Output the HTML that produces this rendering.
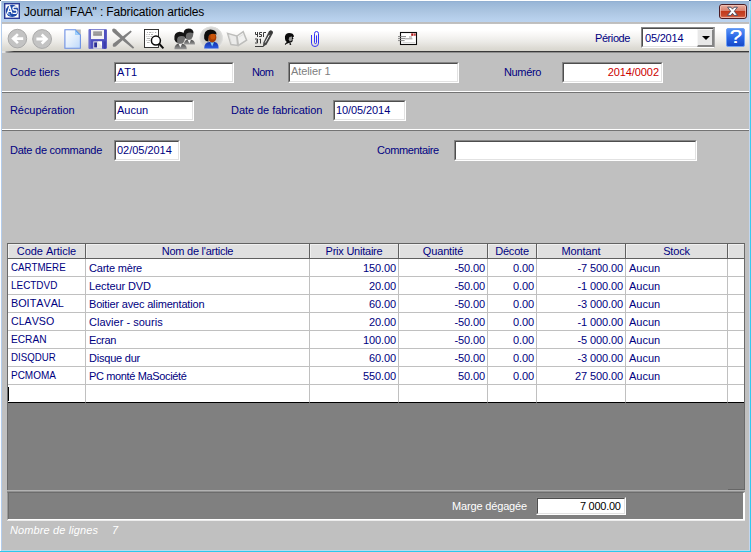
<!DOCTYPE html>
<html>
<head>
<meta charset="utf-8">
<title>Journal FAA</title>
<style>
html,body{margin:0;padding:0;}
body{width:751px;height:552px;overflow:hidden;background:#c0c0c0;position:relative;font-family:"Liberation Sans",sans-serif;font-size:11px;color:#000080;font-kerning:none;}
.abs{position:absolute;}
#titlebar{left:0;top:0;width:751px;height:24px;background:linear-gradient(to bottom,#8fadd0 1px,#99b6d7 2.5px,#a3bedc 7px,#aec7e3 13px,#b6cfeb 18px,#bbd3ef 22px,#bcbcbc 22px,#c2c2c2 24px);}
#titletext{left:24px;top:4px;font-size:12px;line-height:16px;color:#000;white-space:nowrap;}
#toolbar{left:2px;top:24px;width:747px;height:27px;background:linear-gradient(to bottom,#ffffff 0px,#ffffff 6px,#f6f5f3 12px,#ebeae6 18px,#dddbd4 24px,#d8d6ce 27px);}
#tbline{left:2px;top:51px;width:747px;height:2px;background:linear-gradient(to bottom,#3a3a3a 0px,#3a3a3a 1px,#8e8e8e 1px,#8e8e8e 2px);}
.lbl{position:absolute;white-space:nowrap;line-height:13px;height:13px;color:#000080;}
.inp{position:absolute;box-sizing:border-box;background:#fff;border:1px solid;border-color:#868686 #fff #fff #868686;height:21px;}
.inp>i{position:absolute;left:0;top:0;right:0;bottom:0;border:1px solid;border-color:#4e4e4e #e2e2e2 #e2e2e2 #4e4e4e;}
.inp>span{position:absolute;left:2px;top:3px;line-height:13px;white-space:nowrap;}
.inp.r>span{left:auto;right:3px;}
.sep{position:absolute;left:2px;width:747px;height:2px;border-top:1px solid #fff;border-bottom:1px solid #737373;box-sizing:border-box;}
#grid{left:7px;top:243px;width:738px;height:247px;background:#808080;box-sizing:border-box;border:1px solid #6a6a6a;border-top-color:#626262;border-bottom:none;}
table{border-collapse:separate;border-spacing:0;position:absolute;left:8px;top:244px;table-layout:fixed;background:#fff;}
td,th{box-sizing:border-box;padding:0;font-weight:normal;font-size:11px;color:#000080;white-space:nowrap;overflow:hidden;}
th{height:15px;background:#e0e0e0;border-right:1px solid #606060;border-bottom:1px solid #606060;line-height:14px;text-align:center;box-shadow:inset 1px 1px 0 #f0f0f0;}
td{height:18px;border-right:1px solid #c0c0c0;border-bottom:1px solid #c0c0c0;line-height:13px;padding:3px 2px 1px 3px;}
td.n{text-align:right;}
td.c{padding-top:2px;padding-bottom:2px;}
td span,th span{display:inline-block;}
tr.last td{border-bottom:1px solid #000;}
td:last-child,th:last-child{border-right:none;}
</style>
</head>
<body>
<div id="titlebar" class="abs"></div>
<div id="titletext" class="abs" style="letter-spacing:-0.14px">Journal "FAA" : Fabrication articles</div>
<div id="toolbar" class="abs"></div>
<div id="tbline" class="abs"></div>
<div class="abs" style="left:2px;top:51px;width:12px;height:2px;background:linear-gradient(to right,#e4e4e4 0px,#e0e0e0 3px,#a8a8a8 4px,#8a8a8a 7px,rgba(90,90,90,0) 12px);"></div>
<!-- app icon -->
<svg class="abs" style="left:4px;top:3px" width="16" height="16" viewBox="0 0 16 16">
<rect x="0.7" y="0.7" width="14.6" height="14.6" fill="#fff" stroke="#2a3a96" stroke-width="1.4"/>
<circle cx="8.1" cy="7.9" r="6.2" fill="#1c48a8"/>
<path d="M2.4 9.6 Q4 12.6 8 13.4 Q5.6 11.6 5.2 9.4 Z" fill="#6f9be0"/>
<path d="M3.3 10.6 L5.7 3.4 L8.1 10.6 M4.2 8.3 H7.2" fill="none" stroke="#fff" stroke-width="1.35"/>
<path d="M12.9 4 H10.2 Q8.9 4 8.9 5.5 Q8.9 7 10.3 7 H11.6 Q13 7 13 8.7 Q13 10.4 11.6 10.4 H8.7" fill="none" stroke="#fff" stroke-width="1.35"/>
</svg>
<!-- close button -->
<svg class="abs" style="left:719px;top:4px" width="28" height="15" viewBox="0 0 28 15">
<defs><linearGradient id="cg" x1="0" y1="0" x2="0" y2="1"><stop offset="0" stop-color="#eab2a4"/><stop offset="0.45" stop-color="#d9806c"/><stop offset="0.5" stop-color="#c2391c"/><stop offset="0.8" stop-color="#c94a2c"/><stop offset="1" stop-color="#e08c74"/></linearGradient></defs>
<rect x="0.5" y="0.5" width="27" height="14" rx="2.5" fill="url(#cg)" stroke="#4b1c24" stroke-width="1"/>
<rect x="1.5" y="1.5" width="25" height="12" rx="1.5" fill="none" stroke="#f3c8bc" stroke-opacity="0.7" stroke-width="1"/>
<path d="M8.6 3.2 L12 3.2 L13.5 5.2 L15 3.2 L18.4 3.2 L15.3 7.3 L18.6 11.4 L15.1 11.4 L13.5 9.3 L11.9 11.4 L8.4 11.4 L11.7 7.3 Z" fill="#fff" stroke="#45485c" stroke-width="0.9" stroke-linejoin="round"/>
</svg>
<!-- toolbar icons -->
<svg class="abs" style="left:0;top:23px" width="751" height="30" viewBox="0 23 751 30">
<defs>
<linearGradient id="docg" x1="0" y1="0" x2="1" y2="1"><stop offset="0" stop-color="#ffffff"/><stop offset="0.5" stop-color="#e2eefc"/><stop offset="1" stop-color="#bcd8fb"/></linearGradient>
<radialGradient id="hl" cx="0.5" cy="0.5" r="0.5"><stop offset="0" stop-color="#b4b4b2"/><stop offset="0.5" stop-color="#c8c8c6"/><stop offset="0.85" stop-color="#d6d6d4"/><stop offset="0.95" stop-color="#e2e2e0"/><stop offset="1" stop-color="#eeeeec" stop-opacity="0"/></radialGradient>
<linearGradient id="hg" x1="0" y1="0" x2="0" y2="1"><stop offset="0" stop-color="#5a94f6"/><stop offset="0.5" stop-color="#2a66e6"/><stop offset="1" stop-color="#1648c8"/></linearGradient>
<linearGradient id="gb" x1="0" y1="0" x2="0" y2="1"><stop offset="0" stop-color="#484848"/><stop offset="1" stop-color="#9a9a9a"/></linearGradient>
<linearGradient id="bb" x1="0" y1="0" x2="0" y2="1"><stop offset="0" stop-color="#1230a8"/><stop offset="1" stop-color="#2c5ce4"/></linearGradient>
</defs>
<!-- back / forward -->
<circle cx="17.4" cy="38.6" r="9.3" fill="#c3c3c3" stroke="#a9a9a9" stroke-width="1"/>
<path d="M11.2 38.6 L17 33.2 L18.8 35 L16.6 37.2 L23.2 37.2 L23.2 40 L16.6 40 L18.8 42.2 L17 44 Z" fill="#fff"/>
<circle cx="42.1" cy="39" r="9.4" fill="#c3c3c3" stroke="#a9a9a9" stroke-width="1"/>
<path d="M48.4 39 L42.6 33.6 L40.8 35.4 L43 37.6 L36.4 37.6 L36.4 40.4 L43 40.4 L40.8 42.6 L42.6 44.4 Z" fill="#fff"/>
<!-- new doc -->
<path d="M64.9 29.7 H75.6 L80.4 34.6 V48.3 H64.9 Z" fill="url(#docg)" stroke="#6b8fe4" stroke-width="1.1"/>
<path d="M75.6 29.4 H80.8 V34.8 Z" fill="#b9b9b9"/>
<path d="M75.4 29.8 V34.8 H80.4 Z" fill="#4f9cf0"/>
<path d="M75.4 31 V34.8 H79.2 Z" fill="#a8d4fb"/>
<!-- save -->
<rect x="88.7" y="29.3" width="18.2" height="19.4" rx="0.8" fill="#4e50c0"/>
<rect x="88.7" y="29.3" width="2" height="19.4" fill="#6a6ccc"/>
<rect x="91" y="29.9" width="13" height="9.2" fill="#f4f4f4"/>
<rect x="93.2" y="31.2" width="8.8" height="4.8" fill="#a8a8a8"/>
<rect x="93.2" y="32.6" width="8.8" height="0.7" fill="#8a8a8a"/>
<rect x="93.2" y="34.4" width="8.8" height="0.7" fill="#8a8a8a"/>
<rect x="93.3" y="41.4" width="8.7" height="7.3" fill="#e6e6e6"/>
<rect x="94.2" y="42.4" width="2.8" height="5" fill="#2a2c96"/>
<path d="M97.5 41.4 H102 V46 Z" fill="#fff"/>
<rect x="103.6" y="41.4" width="2.2" height="7.3" fill="#3a3cae"/>
<!-- delete X -->
<path d="M112.4 29 Q114 27.8 115.6 29.2 L134.2 47.4 L133 48.8 L124 41.6 L112.8 32 Q111.8 30.4 112.4 29 Z" fill="#808080"/>
<path d="M130.6 30.4 L131.8 31.8 L116 46.2 Q114.2 47.4 113 46.4 Q112.2 45 113.4 43.6 Z" fill="#808080"/>
<!-- preview -->
<rect x="144.5" y="29.5" width="14" height="18" fill="#fff" stroke="#2c2c2c" stroke-width="0.95"/>
<g fill="#b4b4b4"><rect x="147" y="32" width="1" height="1"/><rect x="149" y="32" width="2.4" height="1"/><rect x="152.4" y="32" width="1" height="1"/><rect x="155" y="32" width="1.2" height="1"/>
<rect x="146.4" y="34" width="1" height="1"/><rect x="148.6" y="34" width="1.4" height="1"/><rect x="151" y="34" width="2" height="1"/>
<rect x="146.4" y="36" width="1" height="1"/><rect x="148.4" y="36" width="1" height="1"/><rect x="150.4" y="36" width="2" height="1"/>
<rect x="146.8" y="38" width="3.4" height="1"/><rect x="146.4" y="40" width="1" height="1"/><rect x="148.4" y="40" width="1.6" height="1"/>
<rect x="147" y="42" width="2.6" height="1"/></g>
<circle cx="155.9" cy="40.6" r="4.5" fill="#fff" stroke="#0a0a0a" stroke-width="1.5"/>
<path d="M159.4 44 L163.4 48.4" stroke="#0a0a0a" stroke-width="1.9" fill="none"/>
<!-- two grey persons -->
<g>
<path d="M184 44.4 Q184 39.6 189 39.6 Q195 39.6 195 44.4 Z" fill="url(#gb)"/>
<path d="M187.6 39.8 L189.4 43.4 L191 39.8 Z" fill="#f2f2f2"/>
<ellipse cx="188.6" cy="34.6" rx="4.6" ry="5.2" fill="#6c6c6c"/>
<path d="M183.6 36 Q182.6 29 188.4 28.6 Q193.6 28.8 193.6 33.4 Q190 31.4 186.6 33.4 Q185.4 35 186 38.4 Q184 38 183.6 36 Z" fill="#161616"/>
<path d="M174.4 49.2 Q174.4 43.4 180 43.4 Q186.8 43.4 186.8 49.2 Z" fill="url(#gb)"/>
<path d="M178.4 43.6 L180.4 47.6 L182.2 43.6 Z" fill="#f2f2f2"/>
<ellipse cx="180" cy="38.2" rx="5" ry="5.6" fill="#707070"/>
<path d="M174.4 39.6 Q173.4 32.2 179.6 31.8 Q185.4 32 185.4 37 Q181.6 35 178 37 Q176.6 38.6 177.2 42.4 Q175 42 174.4 39.6 Z" fill="#141414"/>
</g>
<!-- coloured person -->
<circle cx="211.2" cy="38.2" r="12.2" fill="url(#hl)"/>
<path d="M204.2 48.4 Q204.2 42.2 209.6 42 L214.4 42 Q218.6 42.4 218.6 48.4 Z" fill="url(#bb)"/>
<path d="M210.2 42.2 L212.2 46.6 L214 42.2 Z" fill="#86d2f4"/>
<ellipse cx="212.2" cy="37.4" rx="4.1" ry="5" fill="#a63e06"/>
<ellipse cx="212.8" cy="36.4" rx="2.4" ry="3" fill="#c8540a"/>
<path d="M204.2 38.6 Q203.2 30 210.4 29.4 Q216.6 29.6 216.6 34.6 Q212.6 32.6 209.4 34.8 Q207.8 36.8 208.6 41.6 Q205 41.4 204.2 38.6 Z" fill="#0c0c0c"/>
<!-- book (faded) -->
<path d="M227.6 33.4 L237 36 L237.6 45.4 L231 44.6 Z" fill="#ebebea" stroke="#bdbdbb" stroke-width="1.5"/>
<path d="M237 36 L243.2 31.6 L246.6 40.2 L238.4 45.4 Z" fill="#f0f0ef" stroke="#bdbdbb" stroke-width="1.5"/>
<path d="M229 35 L231.6 43.6 M239 37 L244 34" stroke="#dcdcda" stroke-width="0.8" fill="none"/>
<!-- 450/31 pencil -->
<g stroke="#3c3c3c" stroke-width="1" fill="none">
<path d="M255.5 32 V34.5 H258 M257.5 32 V37"/>
<path d="M262 32.5 H259.5 V34.5 H261.5 V36.5 H259"/>
<path d="M263.5 37 V32.5 H266"/>
<path d="M255 39 H257.5 V41 H256 M257.5 41 V43 H255"/>
<path d="M259.5 39.5 L260.5 39 V43.5"/>
<path d="M255 46.5 H263.4"/>
</g>
<path d="M262.8 47 L263.4 42.4 L268.8 31.6 Q270.4 29.8 272.2 31 Q273.4 32.2 272.6 33.8 L266.6 44.6 Z" fill="#454545"/><circle cx="270.9" cy="32.2" r="1.7" fill="#3a3a3a"/>
<path d="M265.2 42.6 L269.2 35.2" stroke="#ededed" stroke-width="1"/>
<!-- little face -->
<path d="M285 39 Q284.2 33.4 289 33 Q293.6 33 294 36.4 L292.6 37.6 L293.6 38.6 L292.4 39.4 L292.8 41 Q291.6 42.6 290.2 42.6 L291.4 44.6 L290.2 45 L288.6 43.4 L286.6 43.8 L285.4 45 L284.8 44 L286.8 42 Q285.2 41 285 39 Z" fill="#0a0a0a"/>
<path d="M289.4 37 L292 36.6 L291.8 40.6 L289.8 41.6 L288.6 39.6 Z" fill="#9a9a9a"/>
<path d="M287.4 43.2 L289 44.4 L290 42.8 Z" fill="#d8d8d8"/>
<!-- paperclip -->
<path d="M311.5 35 V43.2 Q311.5 46.5 315 46.5 Q318.5 46.5 318.5 43.2 V33.6 Q318.5 31.5 316.5 31.5 Q314.5 31.5 314.5 33.6 V42.6 Q314.5 43.6 315.5 43.6 Q316.5 43.6 316.5 42.6 V35.4" fill="none" stroke="#2a2af6" stroke-width="0.95"/>
<!-- envelope -->
<rect x="400.5" y="32.5" width="16" height="12" fill="#fff" stroke="#0c0c0c" stroke-width="1.1"/>
<rect x="411.2" y="33.4" width="2" height="2.4" fill="#b01818"/><rect x="413.6" y="33.4" width="2.2" height="2.4" fill="#c04848"/>
<path d="M398 36.6 H406 M398 38.6 H405 M398 40.6 H404.6" stroke="#7a7a7a" stroke-width="0.9"/>
<path d="M405 38.8 H412.4 M409 37 H412" stroke="#8a8a8a" stroke-width="0.9"/>
<path d="M402.6 42.6 H415" stroke="#c8c8c8" stroke-width="0.8"/>
<!-- help -->
<rect x="726.5" y="28.5" width="18" height="18" rx="1.5" fill="url(#hg)" stroke="#6ea0f4" stroke-width="1"/>
</svg>
<div class="abs" style="left:726px;top:28px;width:19px;height:19px;text-align:center;font-size:18px;line-height:19px;color:#fff;transform:scaleX(1.22);text-shadow:0.5px 0 0 #fff;">?</div>
<!-- Periode + combo -->
<div class="lbl" style="left:595px;top:32px;letter-spacing:-0.42px;">Période</div>
<div class="inp" style="left:641px;top:27px;width:74px;height:21px;border-right-color:#a4a4a4;"><i></i><span style="left:3px;top:4px;letter-spacing:-0.2px;">05/2014</span>
<div class="abs" style="left:55px;top:1px;width:17px;height:18px;box-sizing:border-box;background:#e8e8e8;border:solid;border-width:1px 2px 2px 1px;border-color:#f6f6f6 #858585 #858585 #f6f6f6;"><div class="abs" style="left:4px;top:6px;width:0;height:0;border-left:4px solid transparent;border-right:4px solid transparent;border-top:4px solid #000;"></div></div>
</div>

<!-- form -->
<div class="lbl" style="left:10px;top:66px;letter-spacing:-0.08px;">Code tiers</div>
<div class="inp" style="left:114px;top:62px;width:120px;"><i></i><span>AT1</span></div>
<div class="lbl" style="left:252px;top:66px;letter-spacing:-0.62px;">Nom</div>
<div class="inp" style="left:288px;top:62px;width:171px;"><i></i><span style="letter-spacing:-0.10px;color:#808080;top:2px;">Atelier 1</span></div>
<div class="lbl" style="left:504px;top:66px;letter-spacing:-0.35px;">Numéro</div>
<div class="inp r" style="left:562px;top:62px;width:101px;"><i></i><span style="letter-spacing:-0.10px;margin-right:0.10px;color:#cc0000;">2014/0002</span></div>
<div class="sep" style="top:91px;"></div>
<div class="lbl" style="left:10px;top:104px;letter-spacing:-0.07px;">Récupération</div>
<div class="inp" style="left:114px;top:100px;width:80px;"><i></i><span>Aucun</span></div>
<div class="lbl" style="left:231px;top:104px;letter-spacing:-0.05px;">Date de fabrication</div>
<div class="inp" style="left:333px;top:100px;width:73px;"><i></i><span style="letter-spacing:-0.09px;">10/05/2014</span></div>
<div class="sep" style="top:129px;"></div>
<div class="lbl" style="left:10px;top:144px;letter-spacing:-0.25px;">Date de commande</div>
<div class="inp" style="left:114px;top:140px;width:66px;"><i></i><span style="letter-spacing:-0.03px;">02/05/2014</span></div>
<div class="lbl" style="left:377px;top:144px;letter-spacing:-0.38px;">Commentaire</div>
<div class="inp" style="left:454px;top:140px;width:243px;"><i></i></div>

<!-- grid -->
<div id="grid" class="abs"></div>
<table>
<colgroup><col style="width:78px"><col style="width:224px"><col style="width:89px"><col style="width:89px"><col style="width:49px"><col style="width:89px"><col style="width:102px"><col style="width:16px"></colgroup>
<tr><th><span style="letter-spacing:-0.05px;">Code Article</span></th><th><span style="letter-spacing:-0.25px;">Nom de l'article</span></th><th><span style="letter-spacing:-0.23px;">Prix Unitaire</span></th><th><span style="letter-spacing:-0.15px;">Quantité</span></th><th><span style="letter-spacing:-0.20px;">Décote</span></th><th><span style="letter-spacing:-0.08px;">Montant</span></th><th><span style="letter-spacing:-0.19px;">Stock</span></th><th></th></tr>
<tr><td class="c"><span style="transform-origin:0 50%;transform:scaleX(0.885);">CARTMERE</span></td><td><span style="letter-spacing:-0.20px;">Carte mère</span></td><td class="n"><span style="letter-spacing:-0.12px;margin-right:0.12px;">150.00</span></td><td class="n"><span style="letter-spacing:-0.12px;margin-right:0.12px;">-50.00</span></td><td class="n"><span style="letter-spacing:-0.12px;margin-right:0.12px;">0.00</span></td><td class="n"><span style="letter-spacing:-0.12px;margin-right:0.12px;">-7 500.00</span></td><td><span>Aucun</span></td><td></td></tr>
<tr><td class="c"><span style="transform-origin:0 50%;transform:scaleX(0.902);">LECTDVD</span></td><td><span style="letter-spacing:-0.10px;">Lecteur DVD</span></td><td class="n"><span style="letter-spacing:-0.12px;margin-right:0.12px;">20.00</span></td><td class="n"><span style="letter-spacing:-0.12px;margin-right:0.12px;">-50.00</span></td><td class="n"><span style="letter-spacing:-0.12px;margin-right:0.12px;">0.00</span></td><td class="n"><span style="letter-spacing:-0.12px;margin-right:0.12px;">-1 000.00</span></td><td><span>Aucun</span></td><td></td></tr>
<tr><td class="c"><span style="transform-origin:0 50%;transform:scaleX(0.983);">BOITAVAL</span></td><td><span style="letter-spacing:-0.18px;">Boitier avec alimentation</span></td><td class="n"><span style="letter-spacing:-0.12px;margin-right:0.12px;">60.00</span></td><td class="n"><span style="letter-spacing:-0.12px;margin-right:0.12px;">-50.00</span></td><td class="n"><span style="letter-spacing:-0.12px;margin-right:0.12px;">0.00</span></td><td class="n"><span style="letter-spacing:-0.12px;margin-right:0.12px;">-3 000.00</span></td><td><span>Aucun</span></td><td></td></tr>
<tr><td class="c"><span style="transform-origin:0 50%;transform:scaleX(0.967);">CLAVSO</span></td><td><span style="letter-spacing:0.02px;">Clavier - souris</span></td><td class="n"><span style="letter-spacing:-0.12px;margin-right:0.12px;">20.00</span></td><td class="n"><span style="letter-spacing:-0.12px;margin-right:0.12px;">-50.00</span></td><td class="n"><span style="letter-spacing:-0.12px;margin-right:0.12px;">0.00</span></td><td class="n"><span style="letter-spacing:-0.12px;margin-right:0.12px;">-1 000.00</span></td><td><span>Aucun</span></td><td></td></tr>
<tr><td class="c"><span style="transform-origin:0 50%;transform:scaleX(0.924);">ECRAN</span></td><td><span style="letter-spacing:-0.37px;">Ecran</span></td><td class="n"><span style="letter-spacing:-0.12px;margin-right:0.12px;">100.00</span></td><td class="n"><span style="letter-spacing:-0.12px;margin-right:0.12px;">-50.00</span></td><td class="n"><span style="letter-spacing:-0.12px;margin-right:0.12px;">0.00</span></td><td class="n"><span style="letter-spacing:-0.12px;margin-right:0.12px;">-5 000.00</span></td><td><span>Aucun</span></td><td></td></tr>
<tr><td class="c"><span style="transform-origin:0 50%;transform:scaleX(0.88);">DISQDUR</span></td><td><span style="letter-spacing:-0.22px;">Disque dur</span></td><td class="n"><span style="letter-spacing:-0.12px;margin-right:0.12px;">60.00</span></td><td class="n"><span style="letter-spacing:-0.12px;margin-right:0.12px;">-50.00</span></td><td class="n"><span style="letter-spacing:-0.12px;margin-right:0.12px;">0.00</span></td><td class="n"><span style="letter-spacing:-0.12px;margin-right:0.12px;">-3 000.00</span></td><td><span>Aucun</span></td><td></td></tr>
<tr><td class="c"><span style="transform-origin:0 50%;transform:scaleX(0.908);">PCMOMA</span></td><td><span style="letter-spacing:-0.36px;">PC monté MaSociété</span></td><td class="n"><span style="letter-spacing:-0.12px;margin-right:0.12px;">550.00</span></td><td class="n"><span style="letter-spacing:-0.12px;margin-right:0.12px;">50.00</span></td><td class="n"><span style="letter-spacing:-0.12px;margin-right:0.12px;">0.00</span></td><td class="n"><span style="letter-spacing:-0.12px;margin-right:0.12px;">27 500.00</span></td><td><span>Aucun</span></td><td></td></tr>
<tr class="last"><td></td><td></td><td></td><td></td><td></td><td></td><td></td><td></td></tr>
</table>
<div class="abs" style="left:8px;top:387px;width:1px;height:14px;background:#000;"></div>

<!-- bottom panel -->
<div class="abs" style="left:7px;top:490px;width:738px;height:1px;background:#b2b2b2;"></div>
<div class="abs" style="left:7px;top:491px;width:738px;height:1px;background:#909090;"></div>
<div class="abs" style="left:7px;top:492px;width:738px;height:29px;background:#808080;border:solid;border-width:1px 2px 2px 1px;border-color:#6c6c6c #fff #fff #989898;box-sizing:border-box;"></div>
<div class="abs" style="left:8px;top:493px;width:1px;height:26px;background:#6c6c6c;"></div>
<div class="abs" style="left:8px;top:520px;width:737px;height:1px;background:#ececec;"></div>
<div class="abs" style="left:728px;top:489px;width:17px;height:1px;background:#666;"></div>
<div class="lbl" style="left:452px;top:500px;letter-spacing:-0.16px;color:#fff;">Marge dégagée</div>
<div class="inp r" style="left:536px;top:497px;width:90px;height:18px;"><i></i><span style="letter-spacing:-0.25px;margin-right:0.25px;color:#000;top:2px;right:4px;">7 000.00</span></div>
<div class="lbl" style="left:10px;top:524px;letter-spacing:0.12px;color:#fff;font-style:italic;">Nombre de lignes</div>
<div class="lbl" style="left:112px;top:524px;color:#fff;font-style:italic;">7</div>

<!-- window frame -->
<div class="abs" style="left:0;top:0;width:1px;height:552px;background:#fff;"></div>
<div class="abs" style="left:1px;top:1px;width:1px;height:551px;background:#b4cdec;"></div>
<div class="abs" style="left:0;top:0;width:751px;height:1px;background:#fff;"></div>
<div class="abs" style="left:749px;top:1px;width:1px;height:551px;background:#c4d6ee;"></div>
<div class="abs" style="left:750px;top:1px;width:1px;height:551px;background:linear-gradient(to bottom,#8fdcf4 0px,#3ccbef 40px,#2ec8ee 100%);"></div>
<div class="abs" style="left:2px;top:550px;width:748px;height:1px;background:#b4dcf0;"></div>
<div class="abs" style="left:0;top:551px;width:751px;height:1px;background:#2ec8ec;"></div>
<div class="abs" style="left:0;top:0;width:1px;height:1px;background:#202838;"></div>
<div class="abs" style="left:749px;top:0;width:2px;height:1px;background:linear-gradient(to right,#101820,#3060d0);"></div>
</body>
</html>
